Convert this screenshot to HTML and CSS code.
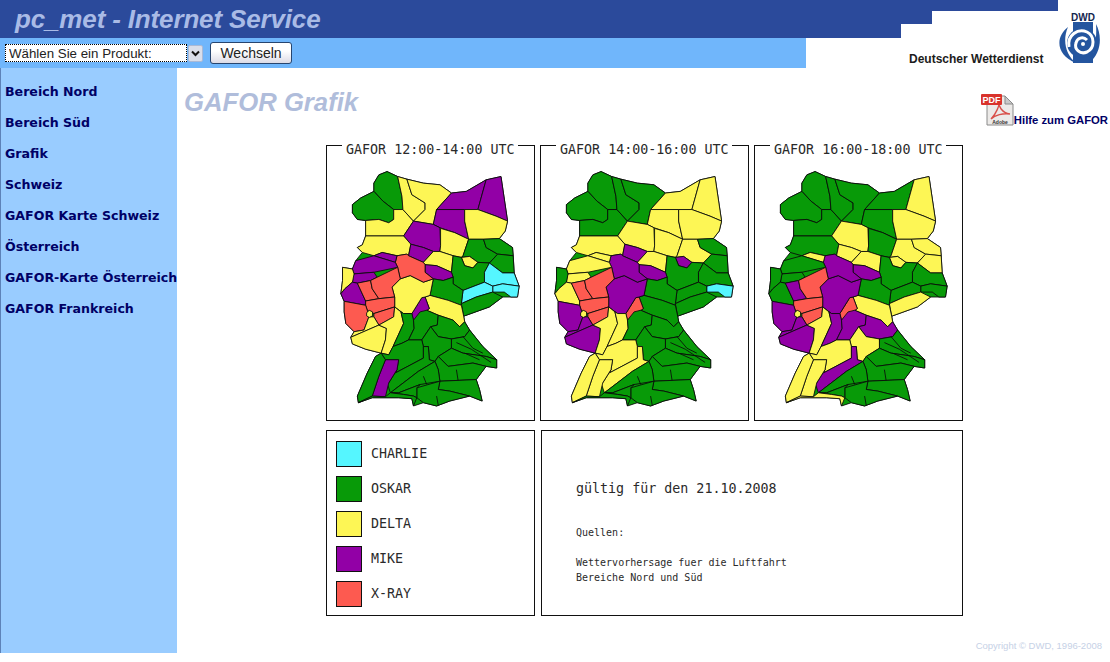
FILE: index.html
```html
<!DOCTYPE html>
<html>
<head>
<meta charset="utf-8">
<title>GAFOR Grafik</title>
<link rel="stylesheet" href="styles.css">
</head>
<body>

<div class="header">
  <div class="header-left">
    <div class="titlebar">pc_met - Internet Service</div>
    <form class="toolbar">
      <select class="product">
        <option>Wählen Sie ein Produkt:</option>
      </select>
      <span class="product-arrow">
        <svg width="9" height="7" viewBox="0 0 9 7"><path d="M1 1.5 L4.5 5 L8 1.5" fill="none" stroke="#111" stroke-width="2"/></svg>
      </span>
      <button type="button" class="change">Wechseln</button>
    </form>
  </div>
  <div class="header-right">
    <div class="step-one"></div>
    <div class="step-two"></div>
    <div class="brand">Deutscher Wetterdienst</div>
    <svg class="logo" width="42" height="52" viewBox="0 0 42 52">
      <rect x="15" y="11" width="20" height="41" fill="#24559f"/>
      <text x="25" y="9.5" class="logo-text">DWD</text>
      <path d="M10 16 C-3 26 -2 44 18 52 C8 44 4 30 10 16Z" fill="#24559f"/>
      <path d="M38 13 C44 24 44 42 31 52 C37 40 39 26 38 13Z" fill="#24559f"/>
      <circle cx="24" cy="32" r="15" fill="#24559f"/>
      <path d="M11 36 C9 24 20 17 29 21 C37 25 37 37 29 41 C22 44 16 38 18 32 C19 27 25 25 29 29" fill="none" stroke="#fff" stroke-width="3"/>
      <circle cx="25" cy="33" r="2" fill="#fff"/>
    </svg>
  </div>
</div>

<div class="main">
  <div class="sidebar">
    <a href="#">Bereich Nord</a>
    <a href="#">Bereich Süd</a>
    <a href="#">Grafik</a>
    <a href="#">Schweiz</a>
    <a href="#">GAFOR Karte Schweiz</a>
    <a href="#">Österreich</a>
    <a href="#">GAFOR-Karte Österreich</a>
    <a href="#">GAFOR Frankreich</a>
  </div>

  <div class="content">
    <div class="content-head">
      <h1>GAFOR Grafik</h1>
      <a href="#" class="help">
        <svg width="33" height="33" viewBox="0 0 33 33">
          <path d="M6 3 H24 L32 11 V32 H6Z" fill="#eceae8" stroke="#8a8a8a"/>
          <path d="M24 3 V11 H32Z" fill="#c9c9c9" stroke="#8a8a8a"/>
          <path d="M10 26 C15 21 19 12 18 8 C17 13 21 20 29 21 C22 20 14 22 10 26Z" fill="none" stroke="#d8504a" stroke-width="1.4"/>
          <rect x="0" y="1" width="21" height="11" rx="1" fill="#d9332c"/>
          <text x="10.5" y="10" class="pdf-tag">PDF</text>
          <text x="19" y="31" class="pdf-adobe">Adobe</text>
        </svg>
        <span class="help-text">Hilfe zum GAFOR</span>
      </a>
    </div>

    <div class="charts">
      <div class="panel">
        <span class="panel-title">GAFOR 12:00-14:00 UTC</span>
        <svg class="map" data-map="0" viewBox="8 15 627 825"></svg>
      </div>
      <div class="panel">
        <span class="panel-title">GAFOR 14:00-16:00 UTC</span>
        <svg class="map" data-map="1" viewBox="8 15 627 825"></svg>
      </div>
      <div class="panel">
        <span class="panel-title">GAFOR 16:00-18:00 UTC</span>
        <svg class="map" data-map="2" viewBox="8 15 627 825"></svg>
      </div>

      <div class="legend">
        <div class="legend-row"><span class="swatch c"></span>CHARLIE</div>
        <div class="legend-row"><span class="swatch g"></span>OSKAR</div>
        <div class="legend-row"><span class="swatch y"></span>DELTA</div>
        <div class="legend-row"><span class="swatch p"></span>MIKE</div>
        <div class="legend-row"><span class="swatch r"></span>X-RAY</div>
      </div>

      <div class="info">
        <p class="valid">gültig für den 21.10.2008</p>
        <p class="small sources">Quellen:</p>
        <p class="small">Wettervorhersage fuer die Luftfahrt<br>Bereiche Nord und Süd</p>
      </div>
    </div>

    <div class="copyright">Copyright © DWD, 1996-2008</div>
  </div>
</div>

<script src="map.js"></script>
</body>
</html>
```

FILE: styles.css
```css
html, body {
  margin: 0;
  height: 662px;
  overflow: hidden;
  background: #fff;
  font-family: "Liberation Sans", Arial, sans-serif;
}

/* header */
.header {
  display: flex;
  height: 68px;
}

.header-left {
  width: 901px;
}

.titlebar {
  height: 38px;
  box-sizing: border-box;
  padding-left: 15px;
  background-color: #2b4a9b;
  color: #a9bbe6;
  font-size: 26px;
  font-weight: bold;
  font-style: italic;
  line-height: 38px;
  letter-spacing: -0.15px;
}

.toolbar {
  display: flex;
  align-items: center;
  width: 806px;
  height: 30px;
  box-sizing: border-box;
  padding-left: 5px;
  background-color: #70b6fb;
}

.product {
  appearance: none;
  width: 182px;
  height: 18px;
  margin: 0;
  padding: 0 0 0 3px;
  border: 1px dotted #000;
  border-radius: 0;
  background: #fff;
  color: #222;
  font-family: "Liberation Sans", Arial, sans-serif;
  font-size: 13.3px;
}

.product-arrow {
  display: flex;
  align-items: center;
  justify-content: center;
  width: 15px;
  height: 17px;
  margin-left: 1px;
  border: 1px solid #a9b9d6;
  box-sizing: border-box;
  border-radius: 2px;
  background-color: #d9deea;
}

.change {
  width: 82px;
  height: 22px;
  margin: 0 0 0 7px;
  padding: 0;
  border: 1px solid #27456f;
  border-radius: 3px;
  background: linear-gradient(#fff, #fff 40%, #dcdbe6);
  color: #222;
  font-family: "Liberation Sans", Arial, sans-serif;
  font-size: 14px;
}

.header-right {
  flex: 1;
  display: grid;
  grid-template-columns: 31px 126px 1fr;
  grid-template-rows: 11px 13px 1fr;
}

.step-one {
  grid-column: 1;
  grid-row: 1 / 3;
  background-color: #2b4a9b;
}

.step-two {
  grid-column: 2;
  grid-row: 1;
  background-color: #2b4a9b;
}

.brand {
  grid-column: 1 / 3;
  grid-row: 3;
  align-self: end;
  padding: 0 0 2px 8px;
  color: #1c1c1c;
  font-size: 12px;
  font-weight: bold;
  white-space: nowrap;
}

.logo {
  grid-column: 3;
  grid-row: 1 / 4;
  margin-top: 11px;
}

.logo-text {
  fill: #14264f;
  font-family: "Liberation Sans", Arial, sans-serif;
  font-size: 10px;
  font-weight: bold;
  text-anchor: middle;
}

/* main area */
.main {
  display: flex;
  height: 594px;
}

.sidebar {
  display: flex;
  flex-direction: column;
  width: 177px;
  height: 585px;
  box-sizing: border-box;
  padding: 8px 0 0 4px;
  border-left: 1px solid #5d82b8;
  background-color: #99ccff;
}

.sidebar a {
  height: 31px;
  color: #000066;
  font-family: "DejaVu Sans", Verdana, sans-serif;
  font-size: 12.6px;
  font-weight: bold;
  line-height: 31px;
  text-decoration: none;
  white-space: nowrap;
}

.content {
  flex: 1;
  display: flex;
  flex-direction: column;
  min-width: 0;
}

.content-head {
  display: flex;
  justify-content: space-between;
  height: 77px;
  padding: 21px 2px 0 7px;
  box-sizing: border-box;
}

h1 {
  margin: 0;
  color: #b0bddb;
  font-size: 25.7px;
  font-weight: bold;
  font-style: italic;
  line-height: 27px;
}

.help {
  display: flex;
  align-items: flex-start;
  height: 33px;
  margin-top: 4px;
  color: #000066;
  font-size: 11.3px;
  font-weight: bold;
  line-height: 13px;
  text-decoration: none;
}

.help-text {
  margin-top: 21px;
}

.pdf-tag {
  fill: #fff;
  font-family: "Liberation Sans", Arial, sans-serif;
  font-size: 9px;
  font-weight: bold;
  text-anchor: middle;
}

.pdf-adobe {
  fill: #333;
  font-family: "Liberation Sans", Arial, sans-serif;
  font-size: 5px;
  font-weight: bold;
  text-anchor: middle;
}

/* charts */
.charts {
  display: grid;
  grid-template-columns: repeat(3, 209px);
  grid-template-rows: 276px 186px;
  gap: 9px 5px;
  margin-left: 149px;
  color: #2a2a2a;
  font-family: "DejaVu Sans Mono", "Liberation Mono", monospace;
}

.panel {
  position: relative;
  box-sizing: border-box;
  border: 1px solid #111;
}

.panel-title {
  position: absolute;
  top: -4px;
  left: 15px;
  padding: 0 3px 0 4px;
  background-color: #fff;
  font-size: 13.33px;
  line-height: 16px;
  white-space: nowrap;
}

.map {
  display: block;
  width: 100%;
  height: 100%;
}

.map polygon,
.map polyline {
  stroke: #0a0a0a;
  stroke-width: 2.6;
  stroke-linejoin: round;
}

.map polyline {
  fill: none;
}

.c { fill: #55f6ff; background-color: #55f6ff; }
.g { fill: #089a08; background-color: #089a08; }
.y { fill: #fdf655; background-color: #fdf655; }
.p { fill: #9200a6; background-color: #9200a6; }
.r { fill: #fd5a50; background-color: #fd5a50; }

.legend {
  box-sizing: border-box;
  padding: 5px 0 0 9px;
  border: 1px solid #111;
  font-size: 13.33px;
}

.legend-row {
  display: flex;
  align-items: center;
  gap: 9px;
  height: 35px;
}

.swatch {
  width: 26px;
  height: 26px;
  box-sizing: border-box;
  border: 1px solid #111;
}

.info {
  grid-column: 2 / 4;
  margin-left: 1px;
  box-sizing: border-box;
  padding: 50px 0 0 34px;
  border: 1px solid #111;
}

.info p {
  margin: 0;
}

.valid {
  font-size: 13.33px;
  line-height: 16px;
}

.small {
  font-size: 10px;
  line-height: 15px;
}

.sources {
  margin: 28px 0 15px !important;
}

.copyright {
  margin: 24px 8px 0 0;
  color: #c6d1e6;
  font-size: 9.5px;
  text-align: right;
}
```

FILE: map.js
```js
// outline under the regions, so no white shows through between them
const outline = '190,90 222,105 250,113 300,125 350,130 385,155 430,150 490,115 535,105 555,240 548,270 530,293 570,320 572,345 575,397 590,437 585,470 565,470 540,470 500,500 422,528 425,545 440,570 480,620 522,660 522,685 490,680 460,720 470,750 478,785 440,770 380,785 340,800 300,790 270,800 265,778 225,775 190,775 145,775 103,790 100,770 130,700 155,650 172,640 125,628 85,612 80,592 90,575 65,550 60,515 60,483 50,460 55,420 55,380 85,385 95,360 115,335 100,320 115,312 125,285 125,238 100,235 85,215 85,190 110,170 150,150 150,125 165,100'

// colours per region: 12-14, 14-16, 16-18 UTC
const regions = [
  ['ggg', outline],
  ['ggg', '150,125 165,100 190,90 222,105 235,165 238,205 210,205 178,180 150,150'],
  ['ggg', '85,190 110,170 150,150 178,180 210,205 210,235 195,245 165,235 125,238 100,235 85,215'],
  ['ygg', '125,238 165,235 195,245 210,235 210,205 238,205 270,240 240,285 125,285'],
  ['ygg', '222,105 250,113 265,160 305,185 305,205 270,240 238,205 235,165'],
  ['ygg', '250,113 300,125 350,130 385,155 340,205 330,250 270,240 305,205 305,185 265,160'],
  ['pyg', '385,155 430,150 490,115 465,205 425,205 340,205'],
  ['pyy', '490,115 535,105 555,240 520,225 465,205'],
  ['pyg', '340,205 425,205 425,240 437,295 395,275 350,260 330,250'],
  ['yyy', '425,205 465,205 520,225 555,240 548,270 530,293 482,295 437,295 425,240'],
  ['pyy', '270,240 330,250 350,260 352,315 350,332 330,332 300,320 262,310 240,285'],
  ['yyg', '352,262 395,275 437,295 420,345 415,350 390,345 350,332 352,315'],
  ['yyg', '125,285 240,285 262,310 255,345 250,340 220,345 175,335 150,345 115,335 100,320 115,312'],
  ['ppy', '262,310 300,320 330,332 300,365 255,345'],
  ['yyy', '330,332 350,332 390,345 385,395 340,375 305,372 300,365'],
  ['gyy', '437,295 482,295 490,320 525,340 500,367 465,365 440,347 415,350 420,345'],
  ['ggy', '482,295 530,293 570,320 572,345 525,340 490,320'],
  ['ggy', '525,340 572,345 575,397 540,397 500,367'],
  ['ypy', '415,350 440,347 465,365 450,382 425,375'],
  ['ggg', '390,345 415,350 425,375 450,382 465,365 500,367 485,395 485,425 420,450 390,430 390,410 385,395'],
  ['cgg', '500,367 540,397 575,397 590,437 540,430 510,437 485,425 485,395'],
  ['ccg', '510,437 540,430 590,437 585,470 565,470 545,455 510,455'],
  ['cgg', '420,450 485,425 510,437 510,455 460,470 415,490'],
  ['ggy', '415,490 460,470 510,455 540,470 500,500 422,528'],
  ['ppp', '305,372 340,375 385,395 390,410 360,420 330,415 305,395'],
  ['ggg', '330,415 360,420 390,410 390,430 420,450 415,490 415,495 375,480 320,465'],
  ['ygy', '305,470 320,465 375,480 415,495 422,528 425,545 410,560 390,540 345,525 310,510 318,505'],
  ['prr', '295,472 305,470 318,505 270,540 265,520'],
  ['ypp', '205,440 230,415 260,405 300,425 330,415 320,465 305,470 295,472 265,520 240,520 213,500 213,470'],
  ['rpp', '220,345 250,340 255,345 300,365 305,372 305,395 330,415 300,425 260,405 230,415 222,380 215,365'],
  ['pyy', '150,345 175,335 220,345 215,365'],
  ['pyg', '95,360 150,345 215,365 222,380 150,395 90,400 85,385'],
  ['pyg', '90,400 150,395 160,410 140,420 100,428 85,425 88,405'],
  ['ygg', '55,380 85,385 90,400 85,425 62,445 50,460 55,420'],
  ['pyg', '62,445 85,425 100,428 125,482 125,495 60,483 50,460'],
  ['rrp', '100,428 140,420 145,445 165,475 125,482'],
  ['rrr', '140,420 160,410 222,380 230,415 205,440 213,470 165,475 145,445'],
  ['rrr', '125,482 165,475 213,470 213,500 150,520 130,510 125,495'],
  ['rrr', '150,520 213,500 210,530 165,555 150,530'],
  ['rpp', '60,483 125,495 130,510 135,530 120,570 90,575 65,550 60,515'],
  ['ypp', '135,530 150,530 165,555 80,592 90,575 120,570'],
  ['ypp', '80,592 165,555 188,565 185,600 172,640 125,628 85,612'],
  ['yyy', '213,500 232,515 240,550 208,620 195,645 172,640 185,600 188,565 165,555 210,530'],
  ['gyp', '232,515 240,520 265,520 270,540 272,565 255,600 235,610 208,620 240,550'],
  ['ggp', '270,540 290,515 310,510 345,525 342,555 322,560 295,600 255,600 272,565'],
  ['ggp', '345,525 390,540 410,560 425,545 440,570 425,590 385,597 345,590 322,560 342,555'],
  ['ggy', '322,560 345,590 385,597 385,625 345,650 335,665 318,660 315,620 300,620 295,600'],
  ['gyy', '195,645 208,620 235,610 255,600 295,600 300,620 300,655 215,700 220,690 225,660 185,660 172,640'],
  ['gyp', '215,700 300,655 300,620 315,620 318,660 335,665 285,695 200,760 190,730 195,730 220,690'],
  ['pyy', '185,660 225,660 220,690 195,730 185,772 145,770 165,710'],
  ['gyy', '155,650 172,640 185,660 165,710 145,770 103,790 100,770 130,700'],
  ['ggg', '385,597 425,590 440,570 480,620 522,660 490,650 420,640 385,625'],
  ['ggg', '385,625 420,640 490,650 522,660 522,685 490,680 450,670 375,680 345,650'],
  ['ggg', '335,665 345,650 375,680 450,670 490,680 460,720 350,725 345,690'],
  ['ggg', '335,665 345,690 350,725 290,735 225,760 200,760 285,695'],
  ['ggg', '350,725 460,720 470,750 478,785 440,770 380,755 345,750'],
  ['ggg', '280,745 350,725 345,750 380,755 440,770 380,785 340,800 300,790 280,775'],
  ['ggg', '200,760 225,760 290,735 280,745 280,775 270,770 240,765'],
  ['ggy', '145,770 185,772 200,760 240,765 270,770 280,775 270,800 265,778 225,775 190,775 145,775 103,790'],
  ['yyy', '128,518 136,510 146,515 146,527 136,532 128,527']
]

// thin inner borders of the southern strips
const lines = [
  '400,608 445,628 505,668',
  '420,590 450,625 480,640',
  '425,640 470,660',
  '400,690 405,722',
  '300,710 310,735',
  '340,770 345,798'
]

const ns = 'http://www.w3.org/2000/svg'

document.querySelectorAll('.map').forEach((svg) => {
  const idx = Number(svg.dataset.map)
  regions.forEach(([colors, points]) => {
    const poly = document.createElementNS(ns, 'polygon')
    poly.setAttribute('points', points)
    poly.setAttribute('class', colors[idx])
    svg.appendChild(poly)
  })
  lines.forEach((points) => {
    const line = document.createElementNS(ns, 'polyline')
    line.setAttribute('points', points)
    svg.appendChild(line)
  })
})
```
